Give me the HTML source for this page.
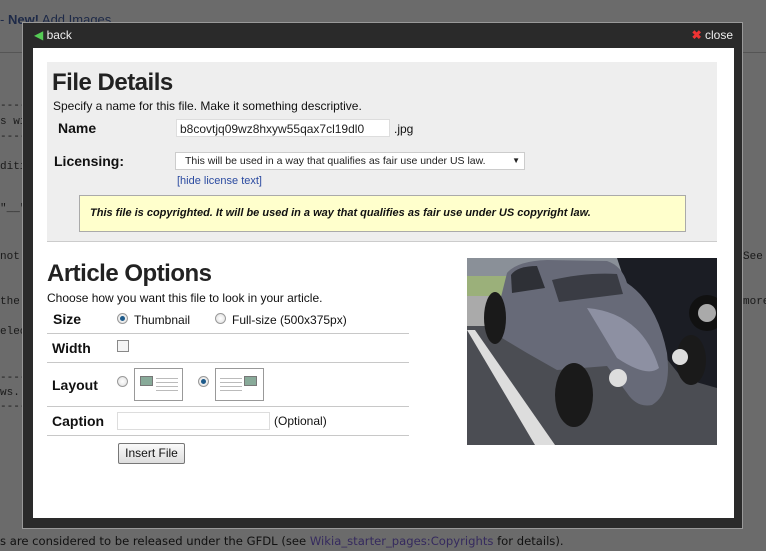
<!DOCTYPE html>
<html><head><meta charset="utf-8"><style>
*{margin:0;padding:0;box-sizing:border-box}
body{width:766px;height:551px;overflow:hidden;background:#6b6b6b;font-family:"Liberation Sans",Arial,sans-serif;position:relative}
.abs{position:absolute}
.bgt{position:absolute;font-family:"Liberation Mono",monospace;font-size:11px;color:#1a1a1a}
.modal{position:absolute;left:22px;top:22px;width:721px;height:507px;background:#2a2a2a;border:1px solid #999}
.inner{position:absolute;left:10px;top:25px;width:701px;height:470px;background:#fff}
.lbl{position:absolute;font-weight:bold;font-size:14px;color:#111}
.t{position:absolute;font-size:12px;color:#111}
.hr{position:absolute;left:47px;width:362px;height:1px;background:#c8c8c8}
.radio{position:absolute;width:11px;height:11px;border-radius:50%;border:1px solid #999;background:radial-gradient(circle,#fff,#ddd)}
.radio.on::after{content:"";position:absolute;left:2px;top:2px;width:5px;height:5px;border-radius:50%;background:#1d5a8a}
.lay{position:absolute;width:49px;height:33px;border:1px solid #999;background:#fff}
</style></head><body>
<div class="abs" style="left:0;top:12px;font-size:13px;color:#1e2a48"> - <b>New!</b> Add Images</div>
<div class="abs" style="left:0;top:52px;width:766px;height:1px;background:#555"></div>
<div class="bgt" style="left:0;top:100px">--------</div>
<div class="bgt" style="left:0;top:116px">s wik</div>
<div class="bgt" style="left:0;top:131px">--------</div>
<div class="bgt" style="left:0;top:161px">ditin</div>
<div class="bgt" style="left:0;top:203px">"__"</div>
<div class="bgt" style="left:0;top:251px">not</div>
<div class="bgt" style="left:0;top:296px">the</div>
<div class="bgt" style="left:0;top:326px">elect</div>
<div class="bgt" style="left:0;top:372px">--------</div>
<div class="bgt" style="left:0;top:387px">ws. E</div>
<div class="bgt" style="left:0;top:401px">--------</div>
<div class="bgt" style="left:743px;top:251px">See</div>
<div class="bgt" style="left:743px;top:296px">more</div>
<div class="abs" style="left:0;top:534px;font-family:'DejaVu Sans',sans-serif;font-size:11.6px;color:#111">s are considered to be released under the GFDL (see <span style="color:#352a5e">Wikia_starter_pages:Copyrights</span> for details).</div>

<div class="modal">
 <div class="abs" style="left:11px;top:5px;font-size:12px;color:#eee"><span style="color:#5c5">&#9664;</span> back</div>
 <div class="abs" style="right:9px;top:5px;font-size:12px;color:#eee"><span style="color:#e33;font-weight:bold">&#10006;</span> close</div>
 <div class="inner"></div>
</div>

<div class="abs" style="left:47px;top:62px;width:670px;height:180px;background:#eee;border-bottom:1px solid #ccc"></div>
<div class="abs" style="left:52px;top:69px;font-size:24px;font-weight:bold;color:#222;letter-spacing:-0.5px">File Details</div>
<div class="t" style="left:53px;top:99px">Specify a name for this file. Make it something descriptive.</div>
<div class="lbl" style="left:58px;top:120px">Name</div>
<div class="abs" style="left:176px;top:119px;width:214px;height:18px;background:#fff;border:1px solid #ddd;font-size:12px;padding:2px 3px;color:#222">b8covtjq09wz8hxyw55qax7cl19dl0</div>
<div class="t" style="left:394px;top:122px">.jpg</div>
<div class="lbl" style="left:54px;top:153px">Licensing:</div>
<div class="abs" style="left:175px;top:152px;width:350px;height:18px;background:#fff;border:1px solid #ccc;font-size:10.5px;padding:2px 9px;color:#222">This will be used in a way that qualifies as fair use under US law.<span style="position:absolute;right:4px;top:3px;font-size:8px">&#9660;</span></div>
<div class="abs" style="left:177px;top:175px;font-size:11px;color:#2a4aa0">[hide license text]</div>
<div class="abs" style="left:79px;top:195px;width:607px;height:37px;background:#ffffcc;border:1px solid #aaa;font-size:11px;font-weight:bold;font-style:italic;padding:11px 10px;color:#111">This file is copyrighted. It will be used in a way that qualifies as fair use under US copyright law.</div>

<div class="abs" style="left:47px;top:260px;font-size:24px;font-weight:bold;color:#222;letter-spacing:-0.5px">Article Options</div>
<div class="t" style="left:47px;top:291px">Choose how you want this file to look in your article.</div>
<div class="lbl" style="left:53px;top:311px">Size</div>
<div class="radio on" style="left:117px;top:313px"></div><div class="t" style="left:134px;top:313px">Thumbnail</div>
<div class="radio" style="left:215px;top:313px"></div><div class="t" style="left:232px;top:313px">Full-size (500x375px)</div>
<div class="hr" style="top:333px"></div>
<div class="lbl" style="left:52px;top:340px">Width</div>
<div class="abs" style="left:117px;top:340px;width:12px;height:12px;border:1px solid #888;background:#f4f4f4"></div>
<div class="hr" style="top:362px"></div>
<div class="lbl" style="left:52px;top:377px">Layout</div>
<div class="radio" style="left:117px;top:376px"></div>
<div class="lay" style="left:134px;top:368px"><div class="abs" style="left:5px;top:7px;width:13px;height:10px;background:#8a9;border:1px solid #777"></div><div class="abs" style="left:21px;top:6px;width:22px;height:19px;background:repeating-linear-gradient(#fff 0 3px,#bbb 3px 4px)"></div></div>
<div class="radio on" style="left:198px;top:376px"></div>
<div class="lay" style="left:215px;top:368px"><div class="abs" style="left:28px;top:7px;width:13px;height:10px;background:#8a9;border:1px solid #777"></div><div class="abs" style="left:4px;top:6px;width:22px;height:19px;background:repeating-linear-gradient(#fff 0 3px,#bbb 3px 4px)"></div></div>
<div class="hr" style="top:406px"></div>
<div class="lbl" style="left:52px;top:413px">Caption</div>
<div class="abs" style="left:117px;top:412px;width:153px;height:18px;border:1px solid #ddd;background:#fff"></div>
<div class="t" style="left:274px;top:414px">(Optional)</div>
<div class="hr" style="top:435px"></div>
<div class="abs" style="left:118px;top:443px;width:67px;height:21px;border:1px solid #777;border-radius:2px;background:linear-gradient(#fafafa,#ddd);font-size:12px;text-align:center;line-height:19px;color:#111">Insert File</div>

<svg class="abs" style="left:467px;top:258px" width="250" height="187" viewBox="0 0 250 187">
<rect width="250" height="187" fill="#4b4d53"/>
<rect width="250" height="20" fill="#8a9098"/>
<rect x="0" y="18" width="40" height="20" fill="#9bb07a"/>
<rect x="0" y="38" width="30" height="30" fill="#aaa"/>
<polygon points="0,72 8,72 88,187 68,187" fill="#ddd"/>
<polygon points="150,0 250,0 250,130 215,120 175,70 160,30" fill="#1b1d24"/>
<circle cx="240" cy="55" r="18" fill="#111"/><circle cx="240" cy="55" r="9" fill="#aaa"/>
<path d="M30,55 L40,15 Q50,3 80,2 L140,3 Q155,8 160,25 Q190,45 200,95 Q205,135 185,147 Q170,150 160,135 L140,108 L90,112 L60,95 L35,80Z" fill="#676a78"/>
<path d="M44,17 Q50,8 70,8 L78,30 L45,35Z" fill="#2e3036"/>
<path d="M85,22 Q120,14 150,16 L156,36 L92,44Z" fill="#3a3c44"/>
<path d="M120,50 Q175,55 192,110 Q180,120 150,100Z" fill="#8d90a2"/>
<ellipse cx="107" cy="137" rx="19" ry="32" fill="#1a1a1a"/>
<ellipse cx="224" cy="102" rx="15" ry="25" fill="#1a1a1a"/>
<ellipse cx="28" cy="60" rx="11" ry="26" fill="#1a1a1a"/>
<circle cx="151" cy="120" r="9" fill="#ddd"/><circle cx="213" cy="99" r="8" fill="#ddd"/>
</svg>
</body></html>
